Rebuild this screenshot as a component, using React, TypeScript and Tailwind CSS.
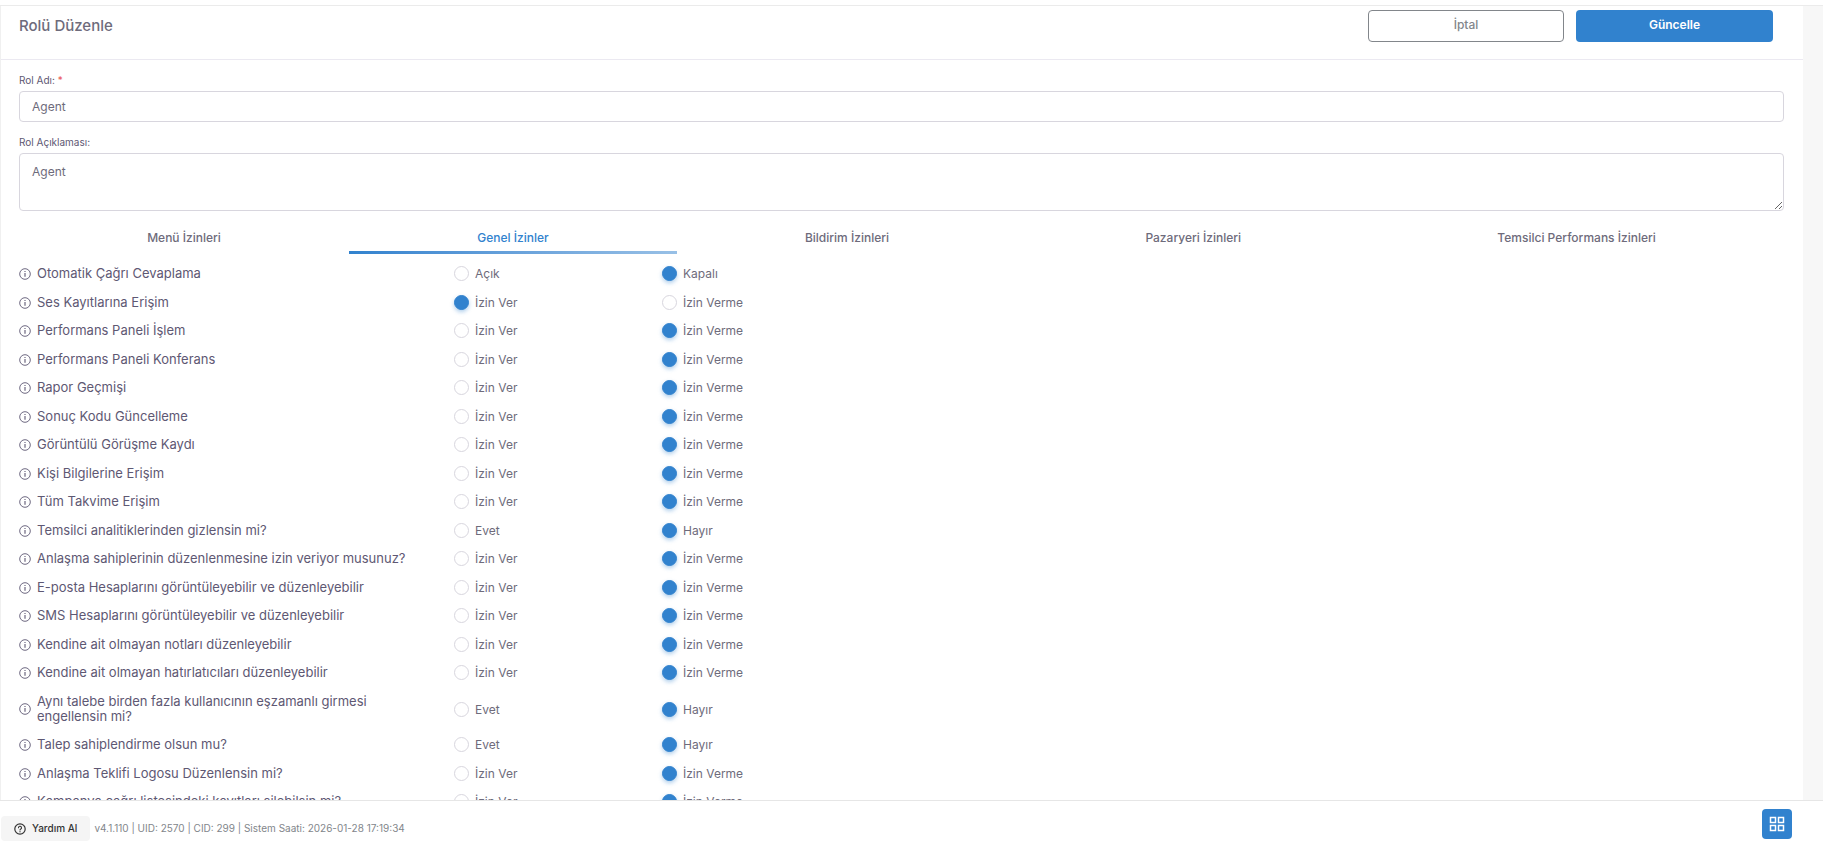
import { useState } from "react";

const TABS = [
  "Menü İzinleri",
  "Genel İzinler",
  "Bildirim İzinleri",
  "Pazaryeri İzinleri",
  "Temsilci Performans İzinleri",
];

const ALLOW = ["İzin Ver", "İzin Verme"];
const YES_NO = ["Evet", "Hayır"];

const PERMISSIONS = [
  { label: "Otomatik Çağrı Cevaplama", options: ["Açık", "Kapalı"], selected: 1 },
  { label: "Ses Kayıtlarına Erişim", options: ALLOW, selected: 0 },
  { label: "Performans Paneli İşlem", options: ALLOW, selected: 1 },
  { label: "Performans Paneli Konferans", options: ALLOW, selected: 1 },
  { label: "Rapor Geçmişi", options: ALLOW, selected: 1 },
  { label: "Sonuç Kodu Güncelleme", options: ALLOW, selected: 1 },
  { label: "Görüntülü Görüşme Kaydı", options: ALLOW, selected: 1 },
  { label: "Kişi Bilgilerine Erişim", options: ALLOW, selected: 1 },
  { label: "Tüm Takvime Erişim", options: ALLOW, selected: 1 },
  { label: "Temsilci analitiklerinden gizlensin mi?", options: YES_NO, selected: 1 },
  { label: "Anlaşma sahiplerinin düzenlenmesine izin veriyor musunuz?", options: ALLOW, selected: 1 },
  { label: "E-posta Hesaplarını görüntüleyebilir ve düzenleyebilir", options: ALLOW, selected: 1 },
  { label: "SMS Hesaplarını görüntüleyebilir ve düzenleyebilir", options: ALLOW, selected: 1 },
  { label: "Kendine ait olmayan notları düzenleyebilir", options: ALLOW, selected: 1 },
  { label: "Kendine ait olmayan hatırlatıcıları düzenleyebilir", options: ALLOW, selected: 1 },
  { label: "Aynı talebe birden fazla kullanıcının eşzamanlı girmesi engellensin mi?", options: YES_NO, selected: 1 },
  { label: "Talep sahiplendirme olsun mu?", options: YES_NO, selected: 1 },
  { label: "Anlaşma Teklifi Logosu Düzenlensin mi?", options: ALLOW, selected: 1 },
  { label: "Kampanya çağrı listesindeki kayıtları silebilsin mi?", options: ALLOW, selected: 1 },
];

function InfoIcon() {
  return (
    <svg width="12" height="12" viewBox="0 0 12 12" fill="none" stroke="currentColor" className="shrink-0 text-[#5e5873]">
      <circle cx="6" cy="6" r="5.3" strokeWidth="0.9" />
      <path d="M6 5v3.8M6 3v1.1" strokeWidth="1.1" />
    </svg>
  );
}

function HelpIcon() {
  return (
    <svg width="12" height="12" viewBox="0 0 12 12" fill="none" stroke="currentColor" strokeLinecap="round">
      <circle cx="6" cy="6" r="5.2" strokeWidth="1.2" />
      <path d="M4.5 4.8a1.5 1.5 0 1 1 2.3 1.2c-.5.3-.8.5-.8 1" strokeWidth="1.1" />
      <path d="M6 8.7v.1" strokeWidth="1.2" />
    </svg>
  );
}

function PermissionRow({ index }: { index: number }) {
  const { label, options, selected } = PERMISSIONS[index];

  return (
    <div
      role="radiogroup"
      aria-labelledby={`perm-${index}`}
      className="grid grid-cols-[435px_208px_1fr] items-center pt-[7px] pb-[7px] even:pb-[6px]"
    >
      <div className="flex items-center gap-[6px] pr-4">
        <InfoIcon />
        <span id={`perm-${index}`} className="text-[13px] leading-[15px] text-[#5e5873]">
          {label}
        </span>
      </div>
      {options.map((option, i) => (
        <label key={option} className="flex items-center gap-[6px] text-[12px] leading-[15px] text-[#6e6b7b]">
          <input
            type="radio"
            name={`perm-${index}`}
            defaultChecked={i === selected}
            className="size-[15px] shrink-0 appearance-none rounded-full border border-[#d8d6de] bg-white checked:border-[#3182ce] checked:bg-[#3182ce] checked:shadow-[0_2px_4px_0_rgba(49,130,206,0.4)]"
          />
          {option}
        </label>
      ))}
    </div>
  );
}

export default function App() {
  const [active, setActive] = useState(1);

  return (
    <div className="flex h-screen flex-col overflow-hidden bg-white pt-[5px] font-['Inter',sans-serif]">
      <div className="min-h-0 flex-1 overflow-hidden border-t border-[#ebebeb] bg-[#f7f7f7] pr-5">
        <main className="border-l border-[#f0f0f0] bg-white">
          {/* Header */}
          <header className="flex items-start justify-between border-b border-[#ebe9f1] pt-1 pr-[30px] pb-[17px] pl-[18px]">
            <h1 className="pt-[6px] text-[15px] leading-5 font-medium text-[#6e6b7b]">Rolü Düzenle</h1>
            <div className="flex gap-3">
              <button
                type="button"
                className="h-8 w-[196px] rounded border border-[#82868b] pb-[2px] text-[12px] font-medium text-[#82868b]"
              >
                İptal
              </button>
              <button
                type="button"
                className="h-8 w-[197px] rounded bg-[#3182ce] pb-[2px] text-[12px] font-semibold text-white"
              >
                Güncelle
              </button>
            </div>
          </header>

          <form className="pt-[13px] pr-[19px] pl-[18px]">
            <label htmlFor="role-name" className="mb-1 block text-[10px] leading-[14px] text-[#5e5873]">
              Rol Adı: <span className="text-[#ea5455]">*</span>
            </label>
            <input
              id="role-name"
              defaultValue="Agent"
              className="block h-[31px] w-full rounded border border-[#d8d6de] px-3 text-[12px] text-[#6e6b7b] outline-none"
            />

            <label htmlFor="role-desc" className="mt-[13px] mb-1 block text-[10px] leading-[14px] text-[#5e5873]">
              Rol Açıklaması:
            </label>
            <textarea
              id="role-desc"
              defaultValue="Agent"
              className="block h-[58px] w-full rounded border border-[#d8d6de] px-3 py-[10px] text-[12px] leading-4 text-[#6e6b7b] outline-none"
            />

            {/* Tabs */}
            <div role="tablist" className="mt-[15px] flex">
              {TABS.map((tab, i) => (
                <button
                  key={tab}
                  type="button"
                  role="tab"
                  aria-selected={i === active}
                  onClick={() => setActive(i)}
                  className={`flex flex-auto flex-col text-[12px] leading-6 font-medium ${
                    i === active ? "text-[#3182ce]" : "text-[#6e6b7b]"
                  }`}
                >
                  <span className="w-full text-center">{tab}</span>
                  <span
                    className={`mt-[1px] h-[3px] w-full ${
                      i === active ? "bg-linear-to-r from-[#3182ce] to-[#98c0e6]" : ""
                    }`}
                  />
                </button>
              ))}
            </div>

            <div className="pt-[5px]">
              {PERMISSIONS.map((permission, i) => (
                <PermissionRow key={permission.label} index={i} />
              ))}
            </div>
          </form>
        </main>
      </div>

      {/* Status bar */}
      <footer className="flex h-11 shrink-0 items-end justify-between border-t border-[#e6e6e6] bg-white pr-[31px] pl-px">
        <div className="flex items-center gap-1 pb-[3px]">
          <button
            type="button"
            className="flex h-[25px] items-center gap-[6px] rounded bg-[#f5f5f5] px-[13px] text-[10px] font-medium text-[#333333]"
          >
            <HelpIcon />
            Yardım Al
          </button>
          <span className="text-[10px] text-[#82868b]">
            v4.1.110 | UID: 2570 | CID: 299 | Sistem Saati: 2026-01-28 17:19:34
          </span>
        </div>
        <button
          type="button"
          aria-label="Menü"
          className="mb-[5px] flex size-[30px] items-center justify-center rounded bg-[#3182ce] text-white"
        >
          <svg width="16" height="16" viewBox="0 0 16 16" fill="none" stroke="currentColor" strokeWidth="1.5">
            <rect x="1.5" y="1.5" width="5" height="5" />
            <rect x="9.5" y="1.5" width="5" height="5" />
            <rect x="1.5" y="9.5" width="5" height="5" />
            <rect x="9.5" y="9.5" width="5" height="5" />
          </svg>
        </button>
      </footer>
    </div>
  );
}
